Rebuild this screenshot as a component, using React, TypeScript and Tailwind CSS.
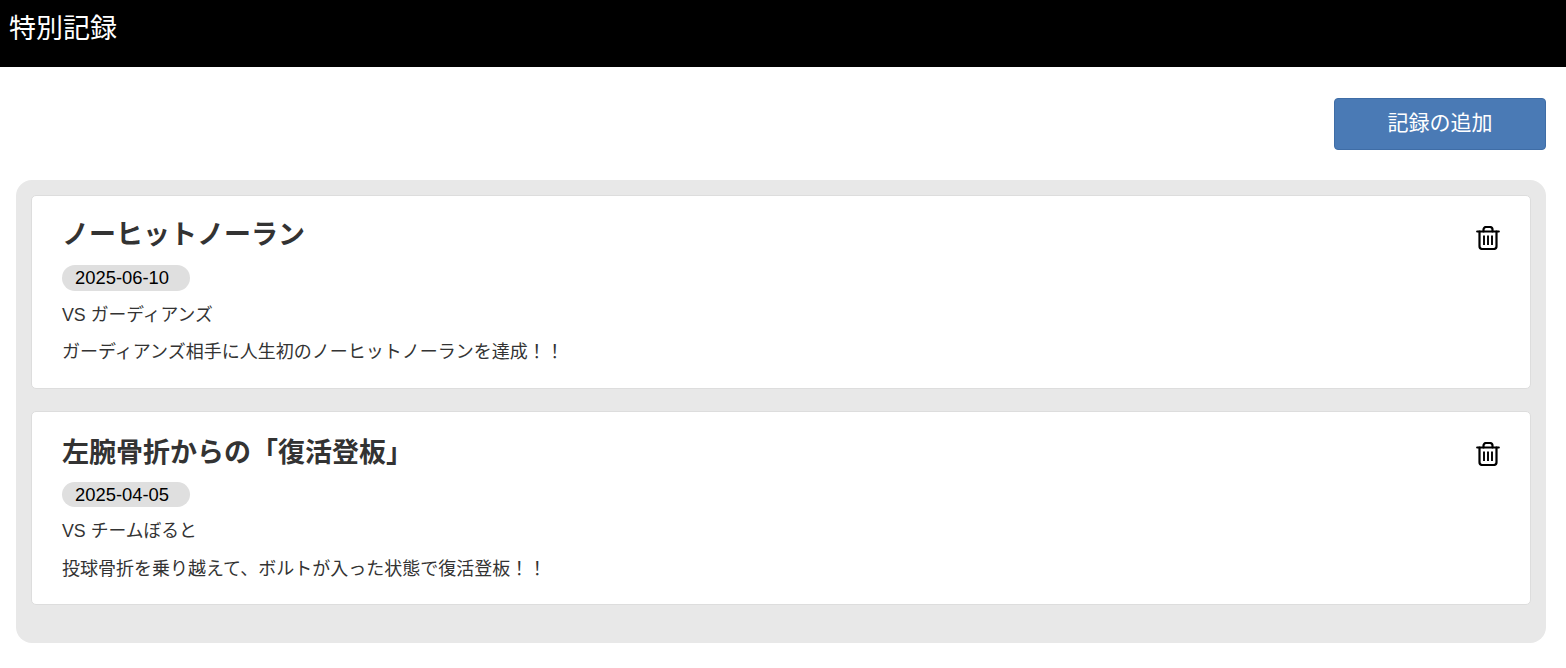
const font = "font-['Liberation_Sans','Noto_Sans_CJK_JP',sans-serif]";

const records = [
  {
    title: "ノーヒットノーラン",
    date: "2025-06-10",
    opponent: "VS ガーディアンズ",
    note: "ガーディアンズ相手に人生初のノーヒットノーランを達成！！",
    titleClass: "mt-[20px]",
    pillClass: "mt-[11px] h-[26px] leading-[26px]",
    noteClass: "mt-[13px]",
  },
  {
    title: "左腕骨折からの「復活登板」",
    date: "2025-04-05",
    opponent: "VS チームぼると",
    note: "投球骨折を乗り越えて、ボルトが入った状態で復活登板！！",
    titleClass: "mt-[22px]",
    pillClass: "mt-[10px] h-[25px] leading-[25px]",
    noteClass: "mt-[14px]",
  },
];

function TrashIcon() {
  return (
    <svg width="24" height="24" viewBox="0 0 24 24" fill="none" stroke="#000" strokeWidth="2.2" strokeLinecap="round" strokeLinejoin="round">
      <path d="M1.2 5.5h21.6" />
      <path d="M3.5 5.5v14.7a2.8 2.8 0 0 0 2.8 2.8h11.4a2.8 2.8 0 0 0 2.8-2.8V5.5" />
      <path d="M7.5 5.5V3.6A2.6 2.6 0 0 1 10.1 1h3.8a2.6 2.6 0 0 1 2.6 2.6v1.9" />
      <path d="M8 9.5v9.5" strokeWidth="1.9" strokeLinecap="butt" />
      <path d="M12 9.5v9.5" strokeWidth="1.9" strokeLinecap="butt" />
      <path d="M16 9.5v9.5" strokeWidth="1.9" strokeLinecap="butt" />
    </svg>
  );
}

function RecordCard({ record }: { record: (typeof records)[number] }) {
  return (
    <div className="flex h-[194px] justify-between rounded-[5px] border border-[#dddddd] bg-white px-[30px]">
      <div>
        <h3 className={`${record.titleClass} text-[27px] leading-[38px] font-bold text-[#333333]`}>{record.title}</h3>
        <span className={`${record.pillClass} block w-[128px] rounded-[13px] bg-[#dfdfdf] pl-[13px] text-[18.4px] text-black`}>
          {record.date}
        </span>
        <p className="mt-[12px] text-[17.8px] leading-[24px] text-[#333333]">{record.opponent}</p>
        <p className={`${record.noteClass} text-[18px] leading-[24px] text-[#333333]`}>{record.note}</p>
      </div>
      <button className="mt-[30px] h-[24px] w-[24px] self-start">
        <TrashIcon />
      </button>
    </div>
  );
}

export default function App() {
  return (
    <div className={`${font} min-h-[668px] bg-white`}>
      <header className="flex h-[67px] items-start bg-black pl-[9px] pt-[11px]">
        <h1 className="text-[27px] leading-[36px] font-normal text-white">特別記録</h1>
      </header>
      <main className="pl-[16px] pr-[20px]">
        <div className="mt-[31px] flex justify-end">
          <button className="h-[52px] w-[212px] rounded-[4px] border border-[#3f6da6] bg-[#4a7ab5] pb-[2px] text-[21px] text-white">
            記録の追加
          </button>
        </div>
        <div className="mt-[30px] flex h-[463px] flex-col gap-[22px] rounded-[16px] bg-[#e8e8e8] p-[15px]">
          {records.map((record) => (
            <RecordCard key={record.date} record={record} />
          ))}
        </div>
      </main>
    </div>
  );
}
